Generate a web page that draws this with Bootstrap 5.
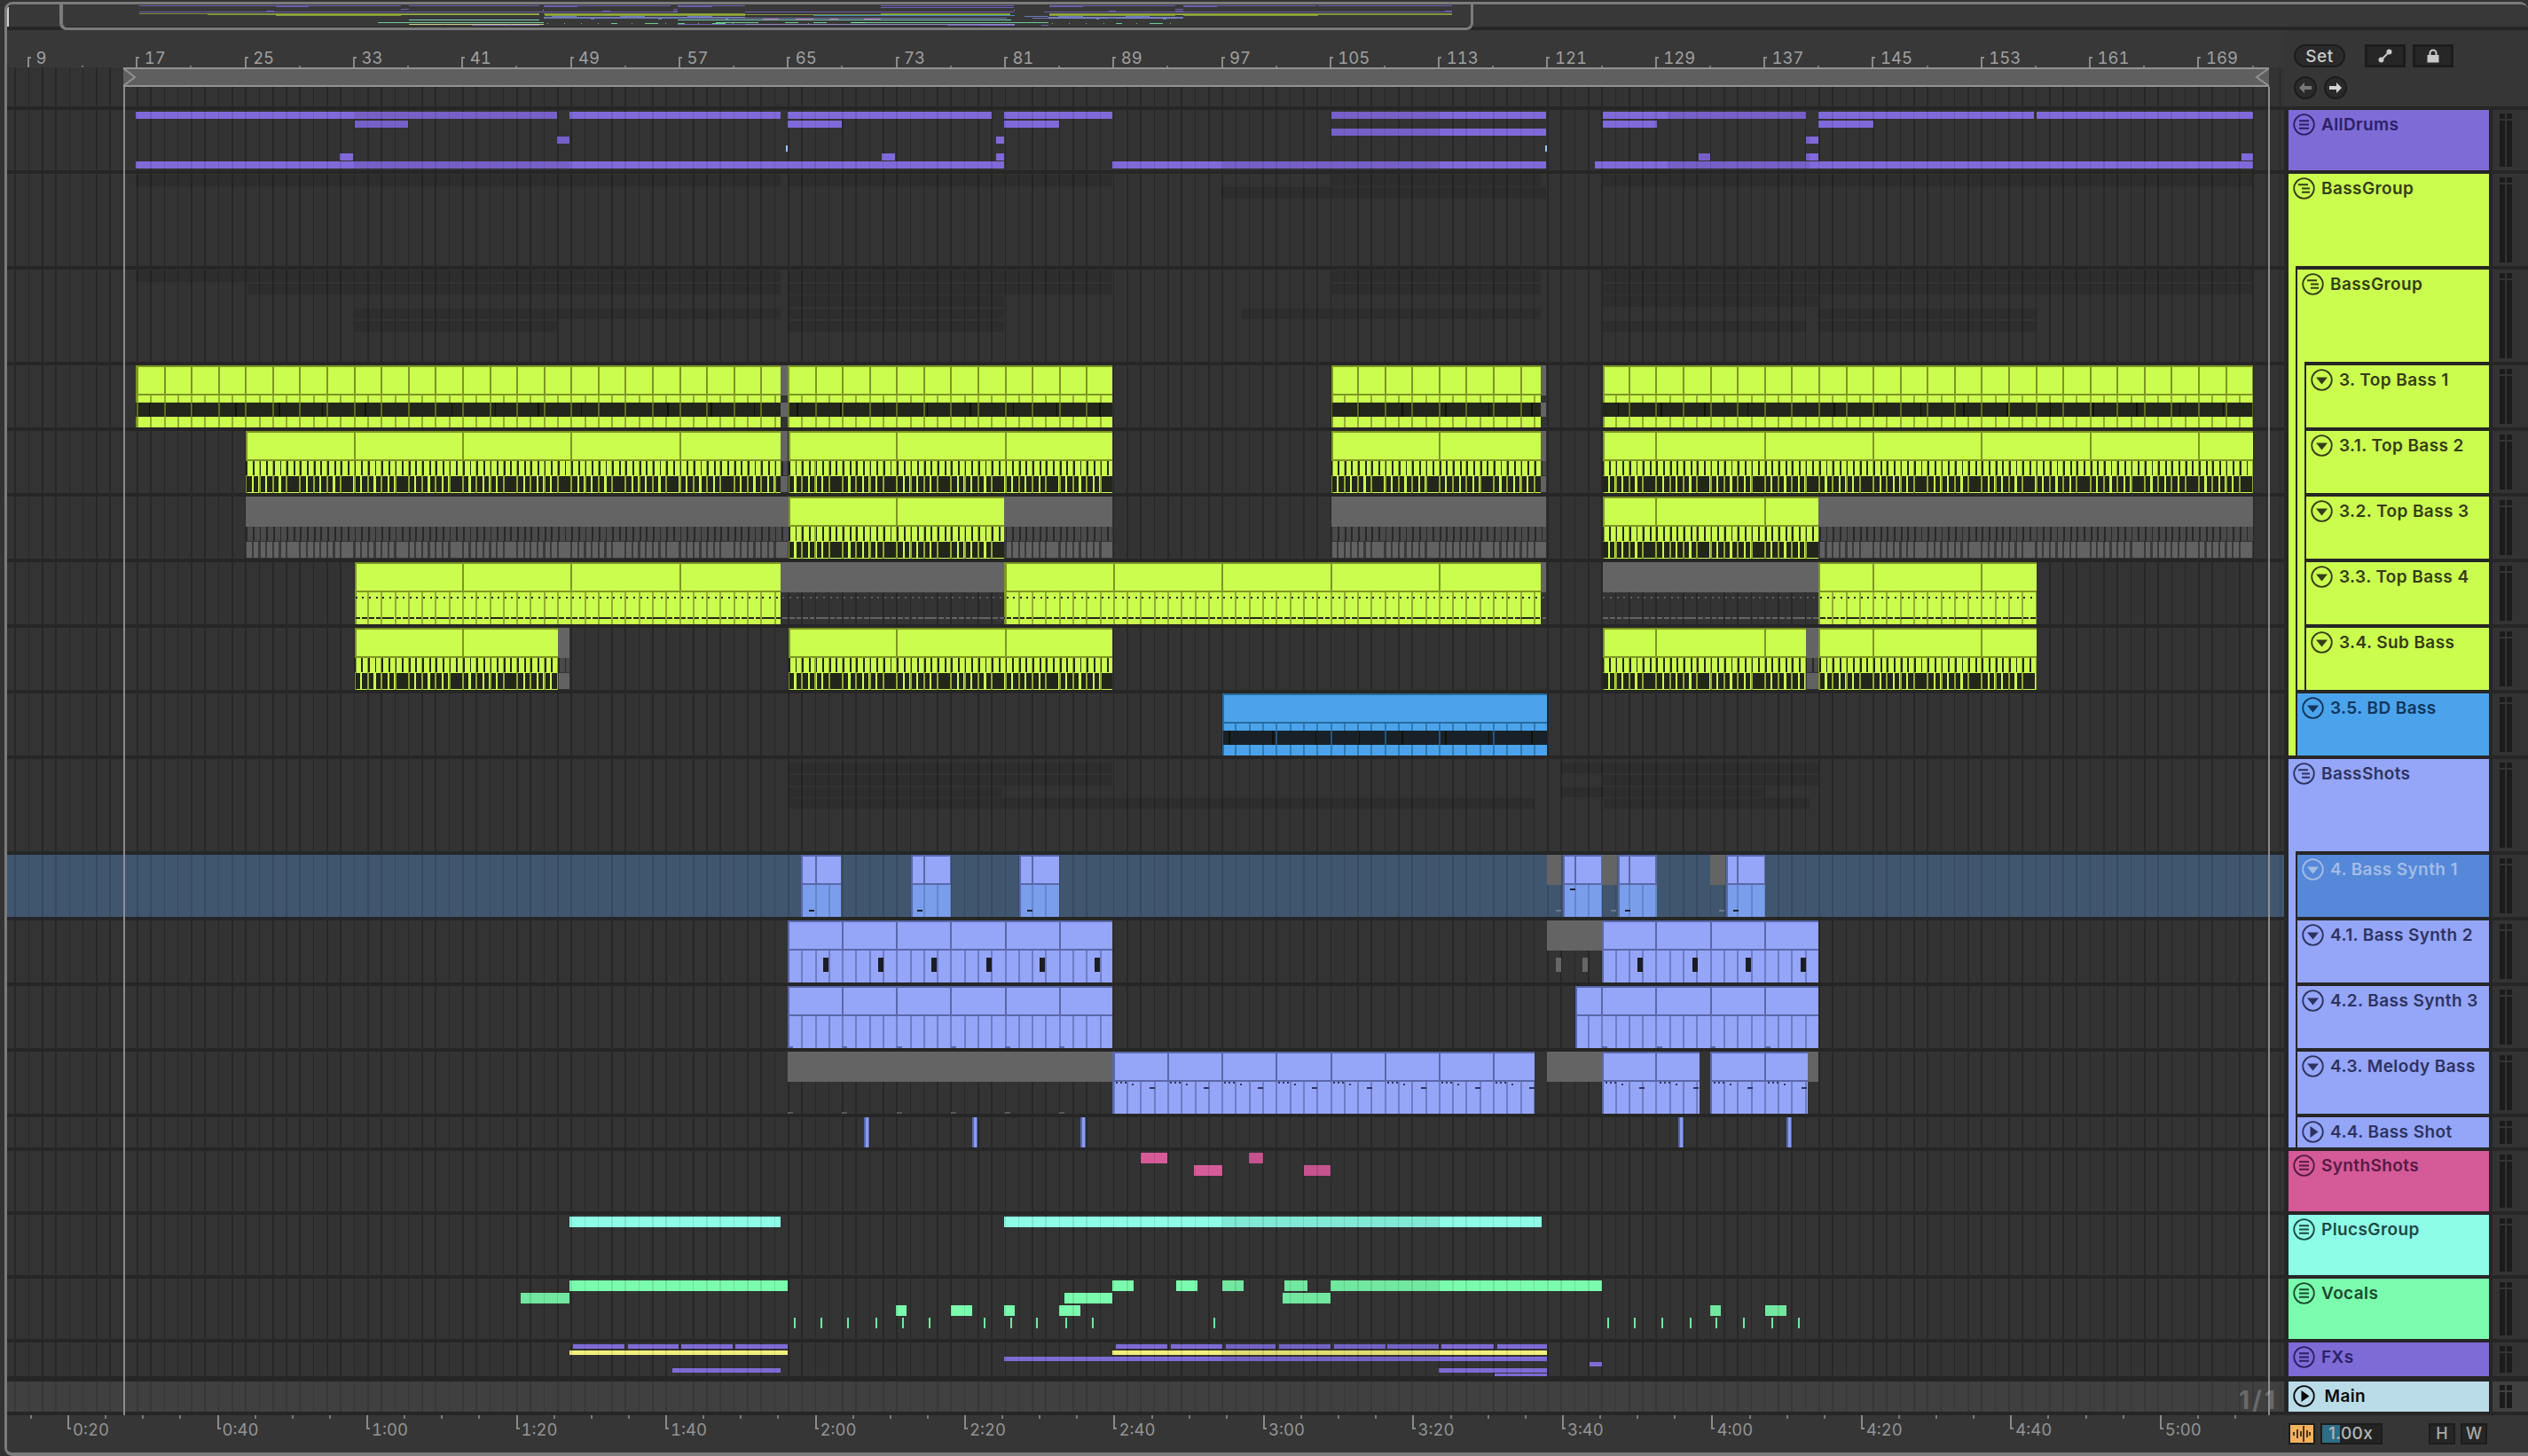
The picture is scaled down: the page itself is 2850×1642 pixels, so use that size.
<!DOCTYPE html>
<html lang="en">
<head>
<meta charset="utf-8">
<title>Arrangement</title>
<link href="https://cdn.jsdelivr.net/npm/bootstrap@5.3.0/dist/css/bootstrap.min.css" rel="stylesheet">
<style>
html,body{margin:0;height:1642px;width:2850px;overflow:hidden;background:#333;font-family:"Inter","Liberation Sans",sans-serif}
.app-frame{margin:2px 0 0 5px;height:1640px;border:3px solid #7b7b7b;border-right:0;border-bottom-width:4px;border-radius:9px 9px 0 9px;overflow:hidden;background:#262626}
.ov-strip{height:25px;background:#383838;flex:none}
.ov-gap{height:4px;background:#262626;flex:none}
.ov-box{left:59px;top:-3px;width:1594px;height:32px;border:3px solid #7b7b7b;border-top:0;border-left-width:4px;border-radius:0 0 8px 8px;border-top-color:transparent}
.ov-tip{left:0;top:3px;width:2px;height:22px;background:#cfcfcf}
.mini{position:absolute;height:1px}
.arr-col{width:2567px;flex:none}
.side-col{width:275px;flex:none;background:#262626}
.bar-ruler{height:42px;background:#383838;flex:none}
.tick-a{position:absolute;top:30px;height:12px;width:2px;background:#8a8a8a}
.tick-a::after{content:"";position:absolute;left:0;top:0;width:4px;height:2px;background:#8a8a8a}
.tick-b{position:absolute;top:40px;height:2px;width:2px;background:#7a7a7a}
.rlabel{position:absolute;top:21px;font-size:18.5px;line-height:20px;color:#a0a0a0;font-weight:400;white-space:nowrap;font-variant-numeric:tabular-nums}
.grid-wrap{height:1520px;flex:none}
.grid-stack{gap:4px}
.trow{position:relative;flex:none;--g:#333333;--l:#272727;background:repeating-linear-gradient(90deg,var(--l) -6.89px,var(--l) -5.29px,var(--g) -5.29px,var(--g) 8.4px)}
.trow-sel{--g:#40566f;--l:#364a62}
.trow-main{--g:#404040;--l:#383838;margin-top:2px}
.h44{height:44px}.h68{height:68px}.h104{height:104px}.h70{height:70px}.h34{height:34px}.h38{height:38px}
.clip-box,.lane-box,.mark-box{position:absolute}
.clip-box{top:0;height:100%}
.c-title{height:34px;position:relative}
.c-body{position:absolute;left:0;right:0;top:34px;bottom:0}
.c-wave{position:absolute;left:0;right:0}
.loop-brace{left:131px;width:2419px;top:0;height:22px;background:#5f5f5f;border-top:2px solid #929292;border-bottom:2px solid #929292}
.loop-brace svg{position:absolute;top:-2px}
.loop-line{top:22px;bottom:0;width:2px;background:#9c9c9c;opacity:.85}
.one-one{right:7px;bottom:1px;font-size:28px;font-weight:700;line-height:32px;letter-spacing:3px;color:rgba(255,255,255,.24)}
.time-ruler{height:42px;background:#363636;flex:none}
.tick-c{position:absolute;top:0;height:16px;width:2px;background:#8a8a8a}
.tick-c::after{content:"";position:absolute;left:0;bottom:0;width:4px;height:2px;background:#8a8a8a}
.tick-d{position:absolute;top:0;height:4px;width:2px;background:#7a7a7a}
.tlabel{position:absolute;top:6px;font-size:18.5px;line-height:20px;color:#949494;white-space:nowrap;font-variant-numeric:tabular-nums}
.ctl-top{height:86px;background:#363636;flex:none;margin-bottom:4px;padding:16px 0 0 11px}
.pill-set{width:58px;height:26px;padding:0;border-radius:13px;border:2px solid #1c1c1c;background:#2a2a2a;color:#c9c9c9;font:500 19px/21px "Inter",sans-serif;letter-spacing:.6px}
.sq-btn{width:46px;height:26px;padding:0;border-radius:0;border:3px solid #1c1c1c;background:#262626;color:#c9c9c9;line-height:0}
.arw-btn{width:26px;height:26px;padding:0;border-radius:50%;border:2px solid #1c1c1c;background:#2a2a2a;line-height:0}
.ctl-row{margin-top:10px}
.side-grid{gap:0}
.pan-col{width:226px;margin-left:5px;flex:none;gap:4px}
.mtr-col{width:40px;margin-left:4px;flex:none;gap:4px}
.mtr-cell{background:#333;padding:4px 0 4px 8px;gap:2px;flex:none}
.mtr-main{background:#404040;margin-top:2px}
.mtr-bar{width:6px;background:linear-gradient(#1b1b1b 6px,transparent 6px,transparent 8px,#1b1b1b 8px)}
.tk{padding:4px 0 0 4.5px;flex:none;font-weight:600;font-size:19px;line-height:25px;letter-spacing:.4px;color:var(--ink);background:var(--pc);white-space:nowrap;overflow:hidden}
.tk svg{width:25px;height:25px;margin-right:7.5px;flex:none}
.sub-list{gap:4px;padding-top:4px;padding-left:10px;background:linear-gradient(90deg,var(--pc) 8px,#262626 8px)}
.tone-purple{--pc:#7f6bd6;--ink:#2a2166}
.tone-lime{--pc:#cbfd4f;--ink:#343d17}
.tone-blue{--pc:#4ba3eb;--ink:#12355c}
.tone-peri{--pc:#95a5f8;--ink:#2d3360}
.tone-sel{--pc:#5588d8;--ink:#a3bce6}
.tone-pink{--pc:#d45a98;--ink:#571a42}
.tone-aqua{--pc:#8dfde8;--ink:#1d4a43}
.tone-green{--pc:#7bfbad;--ink:#1b4a30}
.tone-main{--pc:#b9dce8;--ink:#0a0a0a}
.tk-main{margin-top:2px}
.tk-main svg{margin-right:11px}
.ctl-bot{height:42px;background:#363636;padding:9px 0 0 5px;flex:none}
.wav-btn{width:30px;height:24px;border:2px solid #1c1c1c;background:#f6b05e;line-height:0}
.spd-box{width:70px;height:24px;margin-left:6px;border:2px solid #1c1c1c;background:#232323;color:#b5b5b5;font-size:19px;line-height:20px;font-weight:500;padding-left:7px;letter-spacing:.4px;position:relative}
.spd-fill{left:0;top:0;bottom:0;width:20px;background:#2d6d85}
.spd-txt{position:relative}
.hw-btn{width:30px;height:24px;padding:0;border:2px solid #1c1c1c;background:#262626;border-radius:0;color:#a9a9a9;font:500 18px/20px "Inter",sans-serif}
.hw-first{margin-left:52px}
.hw-next{margin-left:6px}
</style>
</head>
<body>
<svg width="0" height="0" class="position-absolute">
<defs>
<symbol id="ic-m" viewBox="0 0 25 25"><circle cx="12.5" cy="12.5" r="11.3" fill="none" stroke="currentColor" stroke-width="1.8"/><path d="M7 8.2h11M7 12.5h11M7 16.8h11" stroke="currentColor" stroke-width="2" fill="none"/></symbol>
<symbol id="ic-g" viewBox="0 0 25 25"><circle cx="12.5" cy="12.5" r="11.3" fill="none" stroke="currentColor" stroke-width="1.8"/><path d="M6 8.2h11M10 12.5h9M10 16.8h9" stroke="currentColor" stroke-width="2" fill="none"/></symbol>
<symbol id="ic-d" viewBox="0 0 25 25"><circle cx="12.5" cy="12.5" r="11.3" fill="none" stroke="currentColor" stroke-width="1.8"/><path d="M6 9.5h13l-6.500 8z" fill="currentColor"/></symbol>
<symbol id="ic-r" viewBox="0 0 25 25"><circle cx="12.5" cy="12.500" r="11.3" fill="none" stroke="currentColor" stroke-width="1.8"/><path d="M9.500 6v13l9-6.500z" fill="currentColor"/></symbol>
</defs>
</svg>
<div class="app-frame d-flex flex-column position-relative">
  <div class="ov-strip position-relative" id="ov">
    <div class="ov-tip position-absolute"></div>
    <div class="ov-box position-absolute"></div>
  </div>
  <div class="ov-gap"></div>
  <div class="d-flex">
    <div class="arr-col d-flex flex-column">
      <div class="bar-ruler position-relative" id="barRuler"></div>
      <div class="grid-wrap position-relative">
        <div class="grid-stack d-flex flex-column" id="stack"><div class="trow h44"></div></div>
        <div class="loop-brace position-absolute">
          <svg style="left:-1px" width="16" height="22" viewBox="0 0 16 22"><path d="M1 1l13 10L1 21" fill="none" stroke="#929292" stroke-width="2"/></svg>
          <svg style="right:-1px" width="18" height="22" viewBox="0 0 18 22"><path d="M17 1L3 11l14 10" fill="none" stroke="#929292" stroke-width="2"/></svg>
        </div>
        <div class="loop-line position-absolute" style="left:131px"></div>
        <div class="loop-line position-absolute" style="left:2549px"></div>
        <div class="one-one position-absolute">1/1</div>
      </div>
      <div class="time-ruler position-relative" id="timeRuler"></div>
    </div>
    <div class="side-col d-flex flex-column">
      <div class="ctl-top">
        <div class="d-flex">
          <button class="btn pill-set" type="button">Set</button>
          <button class="btn sq-btn" type="button" style="margin-left:22px"><svg width="16" height="16" viewBox="0 0 16 16"><path d="M3 13L13 3" stroke="#c9c9c9" stroke-width="2"/><circle cx="3.500" cy="12.500" r="3" fill="#c9c9c9"/><circle cx="12.500" cy="3.500" r="3" fill="#c9c9c9"/></svg></button>
          <button class="btn sq-btn" type="button" style="margin-left:8px"><svg width="16" height="16" viewBox="0 0 16 16"><path d="M4.500 7V5a3.500 3.500 0 0 1 7 0v2" fill="none" stroke="#c9c9c9" stroke-width="2"/><rect x="1.500" y="7" width="13" height="8.500" fill="#c9c9c9"/></svg></button>
        </div>
        <div class="d-flex ctl-row gap-2">
          <button class="btn arw-btn" type="button"><svg width="14" height="12" viewBox="0 0 14 12"><path d="M6 0L0 6l6 6V8h8V4H6z" fill="#777"/></svg></button>
          <button class="btn arw-btn" type="button"><svg width="14" height="12" viewBox="0 0 14 12"><path d="M8 0l6 6-6 6V8H0V4h8z" fill="#d5d5d5"/></svg></button>
        </div>
      </div>
      <div class="d-flex side-grid">
        <div class="pan-col d-flex flex-column">
          <div class="tk h68 d-flex tone-purple"><svg><use href="#ic-m"/></svg>AllDrums</div>
          <div class="d-flex flex-column tone-lime">
            <div class="tk h104 d-flex"><svg><use href="#ic-g"/></svg>BassGroup</div>
            <div class="sub-list d-flex flex-column">
              <div class="d-flex flex-column">
                <div class="tk h104 d-flex"><svg><use href="#ic-g"/></svg>BassGroup</div>
                <div class="sub-list d-flex flex-column">
                  <div class="tk h70 d-flex"><svg><use href="#ic-d"/></svg>3. Top Bass 1</div>
                  <div class="tk h70 d-flex"><svg><use href="#ic-d"/></svg>3.1. Top Bass 2</div>
                  <div class="tk h70 d-flex"><svg><use href="#ic-d"/></svg>3.2. Top Bass 3</div>
                  <div class="tk h70 d-flex"><svg><use href="#ic-d"/></svg>3.3. Top Bass 4</div>
                  <div class="tk h70 d-flex"><svg><use href="#ic-d"/></svg>3.4. Sub Bass</div>
                </div>
              </div>
              <div class="tk h70 d-flex tone-blue"><svg><use href="#ic-d"/></svg>3.5. BD Bass</div>
            </div>
          </div>
          <div class="d-flex flex-column tone-peri">
            <div class="tk h104 d-flex"><svg><use href="#ic-g"/></svg>BassShots</div>
            <div class="sub-list d-flex flex-column">
              <div class="tk h70 d-flex tone-sel"><svg><use href="#ic-d"/></svg>4. Bass Synth 1</div>
              <div class="tk h70 d-flex"><svg><use href="#ic-d"/></svg>4.1. Bass Synth 2</div>
              <div class="tk h70 d-flex"><svg><use href="#ic-d"/></svg>4.2. Bass Synth 3</div>
              <div class="tk h70 d-flex"><svg><use href="#ic-d"/></svg>4.3. Melody Bass</div>
              <div class="tk h34 d-flex"><svg><use href="#ic-r"/></svg>4.4. Bass Shot</div>
            </div>
          </div>
          <div class="tk h68 d-flex tone-pink"><svg><use href="#ic-m"/></svg>SynthShots</div>
          <div class="tk h68 d-flex tone-aqua"><svg><use href="#ic-m"/></svg>PlucsGroup</div>
          <div class="tk h68 d-flex tone-green"><svg><use href="#ic-m"/></svg>Vocals</div>
          <div class="tk h38 d-flex tone-purple"><svg><use href="#ic-m"/></svg>FXs</div>
          <div class="tk tk-main h34 d-flex tone-main"><svg><use href="#ic-r"/></svg>Main</div>
        </div>
        <div class="mtr-col d-flex flex-column" id="meters"></div>
      </div>
      <div class="ctl-bot d-flex" style="margin-top:4px">
        <div class="wav-btn d-flex align-items-center justify-content-center"><svg width="22" height="18" viewBox="0 0 22 18"><path d="M2 7v4M6 4v10M10 6v6M13 0v18M17 5v8M20 7v4" stroke="#3a2a10" stroke-width="1.800"/></svg></div>
        <div class="spd-box"><div class="spd-fill position-absolute"></div><span class="spd-txt">1.00x</span></div>
        <button class="btn hw-btn hw-first" type="button">H</button>
        <button class="btn hw-btn hw-next" type="button">W</button>
      </div>
    </div>
  </div>
</div>
<script>
const HS=[68,104,104,70,70,70,70,70,70,104,70,70,70,70,34,68,68,68,38,34];
const stack=document.getElementById('stack'),meters=document.getElementById('meters');
const rowEl=[],TOP=[];let yy=124;
HS.forEach((h,i)=>{
  if(i==19)yy+=2;
  TOP.push(yy);yy+=h+4;
  const d=document.createElement('div');
  d.className='trow h'+h+(i==10?' trow-sel':'')+(i==19?' trow-main':'');
  stack.appendChild(d);rowEl.push(d);
  const m=document.createElement('div');
  m.className='mtr-cell d-flex h'+h+(i==19?' mtr-main':'');
  m.innerHTML='<div class="mtr-bar"></div><div class="mtr-bar"></div>';
  meters.appendChild(m);
});
const ov=document.getElementById('ov');
const YM=[[124,6],[192,14],[412,15],[852,17.500],[964,18],[1294,21],[1372,22],[1510,27],[1552,28],[1700,28]];
function ymap(y){for(let i=1;i<YM.length;i++){if(y<=YM[i][0]){const a=YM[i-1],b=YM[i];return a[1]+(b[1]-a[1])*(Math.max(y,a[0])-a[0])/(b[0]-a[0]);}}return 28;}
function mini(x0,x1,y,col){
  const m=document.createElement('div');m.className='mini';
  m.style.left=(158+(x0-154)*.62-8)+'px';m.style.width=Math.max(1,(x1-x0)*.62)+'px';
  m.style.top=Math.round(ymap(y)-5)+'px';m.style.background=col;m.style.opacity=.75;ov.appendChild(m);
}
function pat(x0,p,w,col,phase){
  phase=phase===undefined?154:phase;
  const off=((phase-x0)%p+p)%p,s=off-p;
  return `repeating-linear-gradient(90deg,${col} ${s}px,${col} ${s+w}px,transparent ${s+w}px,transparent ${off}px)`;
}
function add(p,cls,css){const d=document.createElement('div');d.className=cls;Object.assign(d.style,css);p.appendChild(d);return d;}
const BAR=15.29;
const LIME={f:'#cbfd4f',l:'#7d9624',l2:'#93ab33',w:'#23261a',lw:'#5d6b24',mini:'#9ab83c'};
const BLUE={f:'#4ba3eb',l:'#2a6a9c',l2:'#2f7ab5',w:'#172127',lw:'#27557c',mini:'#4ba3eb'};
const PERI={f:'#95a5f8',l:'#5a68a8',l2:'#6d7cc4',w:'#1c1d28',lw:'#5a68a8',mini:'#8090e0'};
const SEL={f:'#7a9eeb',tf:'#95a5f8',l:'#5a68a8',l2:'#6486cc',w:'#1c1d28',lw:'#5a68a8',mini:'#8090e0'};
const GREY={f:'transparent',tf:'#646464',grey:1,w:'#646464'};
function clip(r,x0,x1,c,o){
  o=o||{};
  const wrap=add(rowEl[r],'clip-box',{left:(x0-8)+'px',width:(x1-x0)+'px'});
  const bg=[];
  if(o.t&&!c.grey)bg.push(pat(x0,o.t,2,c.l));
  bg.push('linear-gradient('+(c.tf||c.f)+','+(c.tf||c.f)+')');
  const ti=add(wrap,'c-title',{background:bg.join(',')});
  if(!c.grey)ti.style.boxShadow=`inset 2px 2px 0 ${c.l},inset 0 -2px 0 ${c.l}`;
  const bo=add(wrap,'c-body',{});
  if(!c.grey){
    bo.style.background=pat(x0,BAR,2,c.l2)+',linear-gradient('+c.f+','+c.f+')';
    bo.style.boxShadow=`inset 2px 0 0 ${c.l}`;
    mini(x0,x1,TOP[r]+HS[r]/2,c.mini);
  }
  const W=(t,h,b)=>add(bo,'c-wave',{top:t+'px',height:h+'px',background:b});
  if(o.w=='band'){
    if(c.grey)W(8,16,'#646464');
    else W(8,16,pat(x0,o.bl||30.58,2,c.lw)+','+pat(x0,48.7,1.500,'#101208',168)+',linear-gradient('+c.w+','+c.w+')');
  }
  if(o.w=='ticks'){
    const a=c.grey?'#282828':c.w, b=c.grey?'#626262':c.w;
    const gapA=c.grey?',linear-gradient(#4a4a4a,#4a4a4a)':'';
    W(0,16,pat(x0,7.645,1.800,a,155)+gapA);
    W(17,18,pat(x0,61.16,9,b,204)+','+pat(x0,7.645,5.400,b,156)+(c.grey?',linear-gradient(#3a3a3a,#3a3a3a)':''));
  }
  if(o.w=='dots'){
    const a=c.grey?'#5e5e5e':'#23261a',b=c.grey?'#646464':'#23261a';
    W(5,2,pat(x0,7.645,2,a,156));
    W(28,2,pat(x0,61.16,10,b,186)+','+pat(x0,7.645,5.600,b,156));
  }
  return wrap;
}
function mark(r,x,y,w,h,col){add(rowEl[r],'mark-box',{left:(x-8)+'px',top:(y-TOP[r])+'px',width:w+'px',height:h+'px',background:col});}
const DARK=[[400,642],[1379,1623],[1880,2040]];
function lane(r,y,h,x0,x1,col,opt){
  opt=opt||{};
  const d=add(rowEl[r],'lane-box',{left:(x0-8)+'px',top:(y-TOP[r])+'px',width:(x1-x0)+'px',height:h+'px',background:(opt.nol?'':pat(x0,BAR,1.500,'rgba(0,0,0,.1)'))+(opt.nol?'':',')+'linear-gradient('+col+','+col+')'});
  DARK.forEach(z=>{const a=Math.max(z[0],x0),b=Math.min(z[1],x1);if(a<b&&!opt.nol)add(d,'c-wave',{left:(a-x0)+'px',right:'auto',width:(b-a)+'px',top:0,bottom:0,background:'rgba(0,0,0,.08)'});});
  mini(x0,x1,y,col);
}
function dim(r,y,h,x0,x1){add(rowEl[r],'lane-box',{left:(x0-8)+'px',top:(y-TOP[r])+'px',width:(x1-x0)+'px',height:h+'px',background:'rgba(0,0,0,.11)'});}

/* AllDrums */
const PU='#8069d9';
[[153,628],[642,880],[888,1118],[1132,1254],[1501,1743],[1807,2036],[2050,2293],[2296,2540]].forEach(a=>lane(0,126,8,a[0],a[1],PU));
[[400,460],[888,949],[1132,1194],[1807,1868],[2050,2112]].forEach(a=>lane(0,136,8,a[0],a[1],PU));
lane(0,145,8,1501,1743,PU);
[[628,642],[1123,1132],[2036,2050]].forEach(a=>lane(0,154,8,a[0],a[1],PU));
[[886,888],[1742,1744]].forEach(a=>lane(0,164,7,a[0],a[1],'#9cc4f5',{nol:1}));
[[383,398],[994,1009],[1123,1132],[1915,1928],[2036,2050],[2527,2540]].forEach(a=>lane(0,173,8,a[0],a[1],PU));
[[153,1132],[1254,1743],[1798,2540]].forEach(a=>lane(0,182,8,a[0],a[1],PU));
/* dim groups */
[[153,880],[888,1254],[1501,1737],[1807,2540]].forEach(a=>dim(1,197,13,a[0],a[1]));
[[1377,1743]].forEach(a=>dim(1,211,13,a[0],a[1]));
[[153,880],[888,1254],[1501,1737],[1807,2540]].forEach(a=>dim(2,305,13,a[0],a[1]));
[[279,880],[888,1254],[1501,1737],[1807,2540]].forEach(a=>dim(2,320,12,a[0],a[1]));
[[888,1132],[1807,2050]].forEach(a=>dim(2,333,13,a[0],a[1]));
[[400,880],[888,1132],[1400,1737],[2050,2296]].forEach(a=>dim(2,348,12,a[0],a[1]));
[[400,628],[888,1132],[1807,2036],[2050,2296]].forEach(a=>dim(2,362,12,a[0],a[1]));
[[889,1254],[1760,2050]].forEach(a=>dim(9,860,12,a[0],a[1]));
[[889,1254],[1807,2050]].forEach(a=>dim(9,874,12,a[0],a[1]));
[[889,1130],[1760,1990]].forEach(a=>dim(9,888,11,a[0],a[1]));
[[889,1730],[1808,2040]].forEach(a=>dim(9,900,12,a[0],a[1]));

/* Top Bass 1 */
[[153,880],[888,1254],[1501,1737],[1807,2540]].forEach(a=>clip(3,a[0],a[1],LIME,{t:30.58,w:'band'}));
clip(3,880,888,GREY,{w:'band'});clip(3,1737,1743,GREY,{w:'band'});
/* Top Bass 2 */
[[277,880],[889,1254],[1501,1737],[1807,2540]].forEach(a=>clip(4,a[0],a[1],LIME,{t:122.32,w:'ticks'}));
clip(4,880,888,GREY,{w:'ticks'});clip(4,1737,1743,GREY,{w:'ticks'});
/* Top Bass 3 */
[[277,889],[1132,1254],[1501,1743],[2050,2540]].forEach(a=>clip(5,a[0],a[1],GREY,{w:'ticks'}));
[[889,1132],[1807,2050]].forEach(a=>clip(5,a[0],a[1],LIME,{t:122.32,w:'ticks'}));
/* Top Bass 4 */
[[400,880],[1132,1737],[2050,2296]].forEach(a=>clip(6,a[0],a[1],LIME,{t:122.32,w:'dots'}));
[[880,1132],[1737,1743],[1807,2050]].forEach(a=>clip(6,a[0],a[1],GREY,{w:'dots'}));
/* Sub Bass */
[[400,629],[889,1254],[1807,2036],[2050,2296]].forEach(a=>clip(7,a[0],a[1],LIME,{t:122.32,w:'ticks'}));
clip(7,629,642,GREY,{w:'ticks'});clip(7,2036,2050,GREY,{w:'ticks'});
/* BD Bass */
clip(8,1378,1744,BLUE,{w:'band',bl:61.16});
/* Bass Synth 1 */
[[903,948],[1027,1072],[1149,1194],[1762,1806],[1824,1868],[1946,1990]].forEach(a=>{clip(10,a[0],a[1],SEL,{t:30.58});});
[[1744,1760],[1806,1823],[1928,1945]].forEach(a=>clip(10,a[0],a[1],GREY,{}));
[912,1034,1158,1832,1954].forEach(x=>mark(10,x,1026,6,2,'#1c2230'));
mark(10,1770,1002,6,2,'#1c2230');
[1754,1816,1938].forEach(x=>mark(10,x,1026,6,2,'#6b7a8c'));
/* Bass Synth 2 */
clip(11,888,1254,PERI,{t:61.16});clip(11,1806,2050,PERI,{t:61.16});
clip(11,1744,1806,GREY,{});
[928,990,1050,1112,1172,1234,1846,1908,1968,2030].forEach(x=>mark(11,x,1080,6,16,'#1c1c24'));
[1754,1784].forEach(x=>mark(11,x,1080,6,16,'#666'));
/* Bass Synth 3 */
clip(12,888,1254,PERI,{t:61.16});clip(12,1776,2050,PERI,{t:61.16});
[888,949,1011,1072,1133,1194,1806,1868,1928,1990].forEach(x=>mark(12,x,1180,6,2,'#5a68a8'));
/* Melody Bass */
clip(13,888,1254,GREY,{});clip(13,1744,1806,GREY,{});clip(13,2038,2050,GREY,{});
[[1254,1730],[1806,1916],[1928,2038]].forEach(a=>{
  clip(13,a[0],a[1],PERI,{t:61.16});
  for(let x=a[0]+4;x<a[1]-20;x+=61.16){[0,5,10].forEach(k=>mark(13,x+k,1220,2,2,'#30365e'));mark(13,x+18,1222,2,2,'#30365e');mark(13,x+38,1226,6,2,'#30365e');}
});
[888,949,1011,1072,1133,1194].forEach(x=>mark(13,x,1254,6,2,'#585858'));
/* Bass Shot */
[974,1096,1218,1892,2014].forEach(x=>{add(rowEl[14],'lane-box',{left:(x-8)+'px',top:0,bottom:0,width:'6px',background:'linear-gradient(90deg,#5767ad 2px,#8a9af0 2px,#8a9af0 5px,#5767ad 5px)'});mini(x,x+6,1277,'#8090e0');});
/* Synth Shots */
const PK='#d65b99';
[[1286,1316],[1408,1424]].forEach(a=>lane(15,1300,12,a[0],a[1],PK));
[[1346,1378],[1470,1500]].forEach(a=>lane(15,1314,12,a[0],a[1],PK));
/* Plucs */
lane(16,1372,12,642,880,'#8dfde8');lane(16,1372,12,1132,1738,'#8dfde8');
/* Vocals */
const GR='#7bfbad';
[[642,888],[1254,1278],[1326,1350],[1378,1402],[1448,1474],[1500,1806]].forEach(a=>lane(17,1444,12,a[0],a[1],GR));
[[587,642],[1200,1254],[1446,1500]].forEach(a=>lane(17,1458,12,a[0],a[1],GR));
[[1010,1022],[1072,1096],[1132,1144],[1194,1218],[1928,1940],[1990,2014]].forEach(a=>lane(17,1472,12,a[0],a[1],GR));
[895,925,955,987,1017,1047,1109,1139,1168,1201,1231,1368,1812,1842,1873,1905,1934,1965,1997,2027].forEach(x=>lane(17,1486,12,x,x+1.500,'#6fe8a2',{nol:1}));
/* FX */
const FP='#7f6bd6';
[[646,704],[708,765],[768,826],[829,888],[1258,1316],[1320,1378],[1382,1438],[1442,1500],[1504,1562],[1564,1622],[1625,1684],[1688,1744]].forEach(a=>lane(18,1516,5,a[0],a[1],FP));
[[642,888],[1254,1744]].forEach(a=>lane(18,1523,5,a[0],a[1],'#f2f07c'));
lane(18,1530,5,1132,1744,FP);
lane(18,1536,5,1792,1806,FP);
[[758,880],[1622,1744]].forEach(a=>lane(18,1543,5,a[0],a[1],FP));
lane(18,1549,3,1685,1744,FP);

/* bar ruler */
const br=document.getElementById('barRuler');
for(let b=9;b<=169;b+=8){
  const x=31+(b-9)*15.29-8;
  add(br,'tick-a',{left:x+'px'});
  add(br,'tick-b',{left:(x+61.160)+'px'});
  const l=add(br,'rlabel',{left:(x+9.500)+'px'});l.textContent=b;
}
/* time ruler */
const tr=document.getElementById('timeRuler');
for(let i=0;i<60;i++){
  const x=34+i*42.12-8;if(x>2560)break;
  if((i-1)%4==0){
    add(tr,'tick-c',{left:x+'px'});
    const n=Math.floor((i-1)/4)+1,s=n*20,l=add(tr,'tlabel',{left:(x+6)+'px'});
    l.textContent=Math.floor(s/60)+':'+String(s%60).padStart(2,'0');
  } else add(tr,'tick-d',{left:x+'px'});
}
</script>
<script src="https://cdn.jsdelivr.net/npm/bootstrap@5.3.0/dist/js/bootstrap.bundle.min.js"></script>
</body>
</html>
